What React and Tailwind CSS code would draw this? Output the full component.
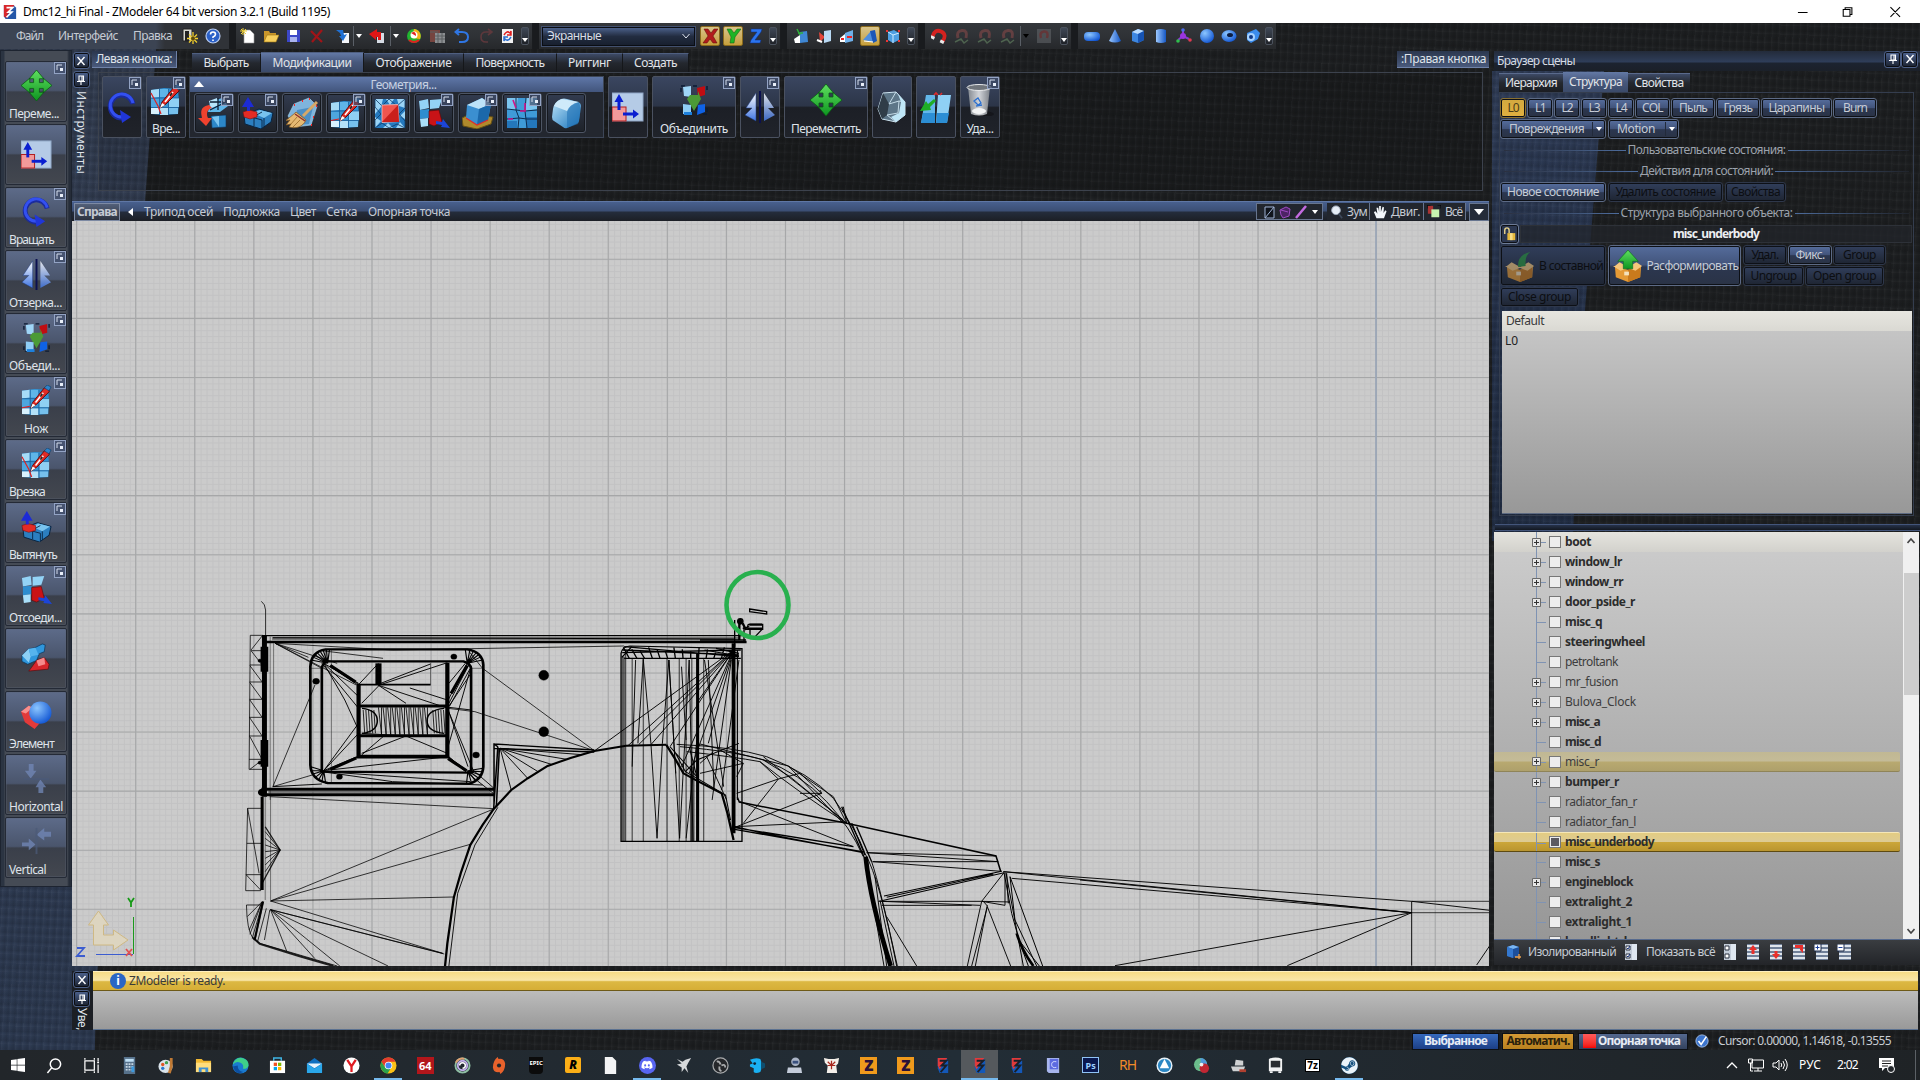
import React, { useLayoutEffect, useRef } from "react";
import { FaWindows, FaDiscord, FaSteam } from "react-icons/fa";

/* Text with a fixed advance width: the letter spacing is derived from the measured width. */
function T({ w, className = "", children }) {
  const ref = useRef(null);
  useLayoutEffect(() => {
    const el = ref.current;
    if (!el || !w) return;
    el.style.letterSpacing = "0px";
    const nat = el.getBoundingClientRect().width;
    el.style.letterSpacing = (w - nat) / String(children).length + "px";
  }, [w, children]);
  return <span ref={ref} className={"inline-block shrink-0 whitespace-nowrap " + className}>{children}</span>;
}

const Defs = () => (
  <svg width="0" height="0" className="absolute" aria-hidden="true">
    <defs>
      <linearGradient id="gBlue" x1="0" y1="0" x2="1" y2="1"><stop offset="0" stopColor="#bfe6fb" /><stop offset="1" stopColor="#1470b8" /></linearGradient>
      <linearGradient id="gGreen" x1="0" y1="0" x2="0" y2="1"><stop offset="0" stopColor="#5fe05f" /><stop offset="1" stopColor="#0d9420" /></linearGradient>
      <linearGradient id="gMirror" x1="0" y1="0" x2="0" y2="1"><stop offset="0" stopColor="#fff" /><stop offset="1" stopColor="#3f74e0" /></linearGradient>
      <linearGradient id="gTrash" x1="0" y1="0" x2="1" y2="0"><stop offset="0" stopColor="#8d9298" /><stop offset=".5" stopColor="#e3e5e8" /><stop offset="1" stopColor="#85898f" /></linearGradient>
      <linearGradient id="gCyl" x1="0" y1="0" x2="1" y2="0"><stop offset="0" stopColor="#9cc8ff" /><stop offset="1" stopColor="#1557c4" /></linearGradient>
      <radialGradient id="gSphere" cx=".35" cy=".3" r=".8"><stop offset="0" stopColor="#8cc6ff" /><stop offset="1" stopColor="#0a4fd0" /></radialGradient>
    </defs>
  </svg>
);

/* ---------- large tool icons, 32 x 32 ---------- */
const Mesh = () => (
  <g>
    <path d="M1 6L14 4 28 5 29 18 28 30 14 31 1 30Z" fill="#2e8fd2" />
    <path d="M1 6L9 5v8L1 14z" fill="#a6dbf7" /><path d="M10 5h8v8h-8z" fill="#5fb5e8" />
    <path d="M1 15h8v8H1z" fill="#4ea6de" /><path d="M10 14h8v9h-8z" fill="#3796d6" /><path d="M19 14h10v9H19z" fill="#8fd0f3" />
    <path d="M1 24h8v6H1z" fill="#d8f1fd" /><path d="M10 24h8v7h-8z" fill="#b4e1f8" /><path d="M19 24h9v6h-9z" fill="#76c0ec" />
    <path d="M9.500 5V31M18.500 5V31M1 14H29M1 23.500H29" stroke="#1d5a92" strokeWidth=".7" fill="none" />
  </g>
);
const Blade = () => (
  <g>
    <path d="M10 24L12 18 24 3 29 3 29 7 16 20Z" fill="#e02a24" stroke="#5d0b0b" strokeWidth="1" />
    <path d="M10 24L12 19 15 21Z" fill="#fff" /><path d="M15 18L23 8" stroke="#fff" strokeWidth="1.600" /><path d="M20 12l2-3" stroke="#222" strokeWidth="1.600" />
    <path d="M24 3L27 0 31 2 29 6Z" fill="#2d82c9" stroke="#12375c" strokeWidth=".6" />
  </g>
);
const I = {
  move: <g fill="url(#gGreen)" stroke="#0a5a14" strokeWidth=".8"><path d="M16 0l7.500 9h-4.500v4h4V8.500L32 16l-9 7.500V19h-4v4h4.500L16 32l-7.500-9H13v-4H9v4.500L0 16l9-7.500V13h4V9H8.500z" /></g>,
  pivot: <g><rect x="0" y="2" width="31" height="28" fill="#b5cbe6" stroke="#8fa6c5" /><rect x="0" y="16" width="14" height="14" fill="#f29a9a" stroke="#b01c1c" /><path d="M7 19V8" stroke="#0a1fd0" strokeWidth="3" /><path d="M2.500 11L7 3l4.500 8zM21 18.500l6 4.500-6 4.500z" fill="#0a1fd0" /><path d="M11 23h11" stroke="#0a1fd0" strokeWidth="3" /></g>,
  rotate: <g fill="none"><path d="M27 13A11.500 11.500 0 1 0 16 27" stroke="#1b2b9c" strokeWidth="5" /><path d="M27 12A11.500 11.500 0 1 0 16 26" stroke="#3350f0" strokeWidth="3" /><path d="M14 19l11 7-9 6z" fill="#2036d8" /></g>,
  mirror: <g><path d="M12 2v28L1 24l7-7H2z" fill="url(#gMirror)" stroke="#1f3a80" strokeWidth=".5" /><path d="M20 2v28l11-6-7-7h6z" fill="url(#gMirror)" opacity=".85" /><path d="M16 0v32" stroke="#0b1050" strokeWidth="2" /></g>,
  unite: <g><path d="M3 8V2h6M15 2h6M29 2v6M3 25v5h5M29 24v6h-6" stroke="#0b1a33" strokeWidth="1.400" fill="none" strokeDasharray="4 2" /><path d="M5 3l8-1v11l-7-1z" fill="#9fd6f7" /><path d="M19 4l8-2v9l-7 2z" fill="#c00d12" /><path d="M12 11h8v-4l3 8-7 12-7-12z" fill="#4b9a36" /><path d="M5 20l8 1v10l-8-1z" fill="#8fcdf5" /><path d="M6 28h8v3H6z" fill="#1d80dd" /><path d="M20 21l7-1v8l-8 3z" fill="#0f62e6" /></g>,
  knife: <g><Mesh /><Blade /><path d="M1 23.500L9 22" stroke="#e02020" strokeWidth="1.200" /></g>,
  cut: <g><Mesh /><Blade /><path d="M1 9l7 13 3 8" stroke="#e02020" strokeWidth="1.200" fill="none" /></g>,
  extrude: <g><path d="M2 18l15-6 14 4-2 9-10 7L3 27z" fill="#2c7fc0" stroke="#08233f" /><path d="M11 16l7-3 12 3-8 5z" fill="#79c3ee" /><path d="M2 18l18 5v8M11 20l9-5M22 21v9M12 20v9" stroke="#08233f" fill="none" strokeWidth=".9" /><path d="M1 15l6-2 8 2v5l-7 2-6-2z" fill="#e42b25" stroke="#7a1010" strokeWidth=".6" /><path d="M6 0l6 10H8v4H5v-4H0z" fill="#1c2bd6" /></g>,
  detach: <g><path d="M1 4l9-2 1 9-9 2zM12 3l12-1-3 9-9 1z" fill="#93d3f6" /><path d="M2 13l9-1v9l-9 1z" fill="#2e8dcf" /><path d="M2 22l8-1v8l-7 1z" fill="#aadff9" /><path d="M11 14l10-1 3 12-8 4-5-2z" fill="#c91317" stroke="#5e0707" strokeWidth=".6" /><path d="M18 24l6 1 1-3 7 9-9-1 1-2-6-1z" fill="#1c45d8" /></g>,
  blob: <g><path d="M1 13l7-7 6-1 8-4 3 1-1 7-5 2-3 7-9 4-6-3z" fill="#2f96dc" stroke="#0b3358" strokeWidth=".7" /><path d="M1 13l7-7 2 8-2 6z" fill="#8dd0f5" /><path d="M8 6l7-1 3 7-8 2z" fill="#56b4ee" /><path d="M16 18l8-3 5 7-1 5-20 2 3-4z" fill="#d8262b" stroke="#5e0b0d" strokeWidth=".7" /><path d="M16 18l8-3 1 7-7 2z" fill="#f6898a" /></g>,
  element: <g><path d="M0 12l8-6 4 2-1 10 10 4-7 8-10-7z" fill="#e33a3a" /><path d="M0 12l8-6 4 2-7 6z" fill="#f98f8c" /><circle cx="20" cy="13" r="11.500" fill="url(#gSphere)" /></g>,
  horiz: <g fill="#7288b8" opacity=".75"><path d="M8 1h5v7h3l-6 8-6-8h4zM18 31h5v-6h3l-6-8-5 8h3z" /><path d="M3 15.500h26v2H3z" fill="#4b5a78" /></g>,
  vert: <g fill="#7288b8" opacity=".75"><path d="M31 6v5h-7v4l-8-6 8-7v4zM1 17v4h7v4l7-6-7-6v4z" /><path d="M15 2h2v27h-2z" fill="#4b5a78" /></g>,
  geo1: <g><path d="M12 5l12-4 6 8-8 6H10z" fill="#5fb6ea" /><path d="M11 4l8-3 2 7-8 3z" fill="#b9e5fb" /><path d="M12 5h16L12 13M20 1v12" stroke="#0e1f36" strokeWidth="1.300" fill="none" /><path d="M13 19l15-1v12l-14 1z" fill="#2c87c8" stroke="#0f3155" strokeWidth=".6" /><path d="M14 20l7-1v11" fill="#7cc4ef" /><path d="M11 8C0 10 4 18 4 21H0l8 8 6-8h-4c-2-4-1-9 4-10z" fill="#f0422e" /></g>,
  brush: <g><path d="M8 7l15-6 8 8-6 19-16 2-7-11z" fill="#7fb4dd" stroke="#a9d8f4" strokeWidth=".6" /><path d="M11 13l16-3-4 17-14 1z" fill="#4c8fc6" /><path d="M8 8h1M16 4h1M23 2h1M30 9h1M27 20h1M25 28h1" stroke="#ff2020" strokeWidth="2" /><path d="M31 5L17 19" stroke="#d6a868" strokeWidth="3" /><path d="M10 15l10 8c-3 7-10 9-17 7l2-3-5 1 4-5-5 1c4-3 8-6 11-9z" fill="#e6b972" stroke="#7d531d" strokeWidth=".7" /><path d="M9 17l10 7" stroke="#8c3030" strokeWidth="1.500" /><path d="M11 20l-6 7M14 23l-7 7" stroke="#9a6a28" strokeWidth=".8" /></g>,
  quad: <g><path d="M1 2h30v29H1z" fill="#2579be" /><path d="M1 2h8l-2 8-6 7zM12 2h8l-4 6zM23 2h8v9l-6-2zM31 14v8l-5-3zM1 20l6 4-6 7zM9 31l5-5 5 5zM22 31l4-6 5 6z" fill="#9bd4f6" /><path d="M1 2l7 7L15 2l8 7 8-7v9l-6 6 6 7v7l-8-4-8 4-7-5-7 5v-8l6-6-6-7z" fill="none" stroke="#0f3a66" strokeWidth=".8" /><path d="M8 8l16-.500 1 17-17 1z" fill="#f0554e" stroke="#ffc5c0" strokeWidth=".7" /><path d="M8 25L24 8l1 17z" fill="#c91f1b" /></g>,
  bevel: <g><path d="M0 21l8-4 23 3-2 7-14 5L1 29z" fill="#b08a2c" stroke="#665015" /><path d="M5 8l15-7 9 6-3 16-11 5L4 21z" fill="#3b8fd0" /><path d="M5 8l15-7 9 6-12 5z" fill="#bde3f8" /><path d="M17 12l12-5-3 16-11 5z" fill="#1b68aa" /><path d="M4 21l11 7 11-5" fill="none" stroke="#e02b2b" strokeWidth="1.200" /></g>,
  weld: <g><path d="M1 1h30v30H1z" fill="#3f9bd8" /><path d="M1 1h11l-2 12-9-1zM20 1h11v11l-12 2z" fill="#7cc5ef" /><path d="M1 24h10v7H1zM20 20h11v11H20z" fill="#2477bb" /><path d="M10 1v12l3 8-1 10M20 1l-1 13 2 17M1 12l9 1 9 1 12-1M1 22l12-1 8 1h10" stroke="#0c2c50" fill="none" /><path d="M7 3l3 8M19 6v8h-5M2 22h5" stroke="#d0148a" strokeWidth="1.600" fill="none" /></g>,
  cube: <g><path d="M3 12Q4 5 11 2q3-1 6 0l11 3q3 1 3 4l-2 15q0 2-3 3l-9 4q-2 1-4-1l-9-6q-2-1-2-4z" fill="url(#gBlue)" /><path d="M4 9Q6 4 12 2l17 3q-9 2-12 9z" fill="#cfeafa" /><path d="M17 15q3-8 12-10 3 8-1 22l-11 4z" fill="#2373b5" opacity=".6" /></g>,
  hull: <g><path d="M7 2l13-1 9 10v13l-9 7-14-3-4-10z" fill="#5d7688" stroke="#cfe6f2" /><path d="M7 2l6 11-2 11-5 4-4-10z" fill="#303d48" /><path d="M13 13l7-12M13 13l10-3 6 1M11 24l9 7M11 24l11-2 1-12" stroke="#c5dcE8" fill="none" /><path d="M22 3l7 8v13l-9 7-5-5 8-4 2-11z" fill="#bfe6f7" /></g>,
  split: <g><path d="M6 4h9v28H1z" fill="#62b7ea" /><path d="M18 4h13l-4 28H16z" fill="#8fd0f4" /><path d="M3 22h12v10H1zM17 22h12l-2 10H16z" fill="#2c8ed4" /><path d="M14 4l2-2 2 2M20 4l2-2" stroke="#e02b2b" strokeWidth="1.600" fill="none" /><path d="M14 8L8 13l-2-3-6 10 11-1-1-3 6-6z" fill="#1fae27" /></g>,
  trash: <g><ellipse cx="19" cy="30" rx="11" ry="3" fill="#101114" opacity=".6" /><path d="M4 3h22l-3 27q-8 3-16 0z" fill="url(#gTrash)" opacity=".9" /><ellipse cx="15" cy="3.500" rx="12" ry="3" fill="#70757b" stroke="#e8eaec" /><path d="M10 17l4-3 3 5-3 2zM12 22l6-1" stroke="#2a6fd0" strokeWidth="1.300" fill="none" /><ellipse cx="15" cy="27" rx="7" ry="3" fill="#f2f3f4" /></g>,
};
const Icon = ({ n, className = "h-8 w-8" }) => <svg viewBox="0 0 32 32" className={"block shrink-0 " + className}>{I[n]}</svg>;

/* ---------- small toolbar icons, 16 x 16 ---------- */
const S = {
  exit: <g><path d="M1 1h9v12H1z" fill="#d9d9d0" stroke="#222" /><path d="M3 3h4v10H3z" fill="#222" /><path d="M11 4v12M5 10.500h11M7 6.500l8 8M15 6.500l-8 8" stroke="#f2ce2e" strokeWidth="1.300" /><circle cx="11" cy="10.500" r="2" fill="#5a4a10" /></g>,
  help: <g><circle cx="8" cy="8" r="7" fill="#2b61c8" stroke="#b9cbee" strokeWidth="1.200" /><path d="M5.500 6.500Q5.500 4 8 4t2.500 2.300Q10.500 8 8 9v1M8 11.500v1.500" stroke="#fff" strokeWidth="1.600" fill="none" /></g>,
  new: <g><path d="M4 2h6l4 4v9H4z" fill="#fff" stroke="#999" strokeWidth=".6" /><path d="M3 0v7M0 3h7M1 1l5 5M6 1L1 6" stroke="#f1d23a" /></g>,
  open: <g><path d="M1 3h5l1 2h6v9H1z" fill="#c9962a" /><path d="M4 7h12l-3 7H1z" fill="#f7cf5c" stroke="#9a7313" strokeWidth=".6" /></g>,
  save: <g><path d="M1 2h13v12H1z" fill="#3c47c9" /><path d="M4 2h7v5H4z" fill="#fff" /><path d="M4 9h7v5H4z" fill="#aab3ee" /></g>,
  del: <path d="M2 3l11 11M13 2L3 14" stroke="#a01418" strokeWidth="2.200" />,
  import: <g><path d="M7 5h7v10H7z" fill="#f4f6fa" /><path d="M1 2l7 0 1 5 3-1-4 7-4-5 2 0-1-3z" fill="#1f70d4" /></g>,
  export: <g><path d="M8 5h7v10H8z" fill="#d7dce4" /><path d="M8 1v3h4v8H9V9H7v3L0 6z" fill="#e01616" /></g>,
  ball: <g><circle cx="8" cy="8" r="7" fill="#21b530" /><path d="M8 1a7 7 0 0 1 6 10L6 10z" fill="#f2b21c" /><circle cx="8" cy="7" r="3.500" fill="#fff" /><path d="M5 5q5-3 5 3z" fill="#e02020" /><path d="M3 12q5 4 10 0" stroke="#e02020" strokeWidth="2" fill="none" /></g>,
  wall: <g><path d="M0 2h10v4H5v8H0z" fill="#76443f" /><path d="M5 5h10v10H5z" fill="#8b8e91" /><path d="M5 8h10M5 11h10M8 5v10M12 5v10M0 4h8" stroke="#5b5e61" /></g>,
  undo: <path d="M1 4h7q6 0 6 5t-6 5H5M5 1L1.500 4 5 7" stroke="#2f76e4" strokeWidth="2" fill="none" />,
  redo: <path d="M15 4H9Q4 4 4 9t5 5h2M11 1l4 3-4 3" stroke="#5d383c" strokeWidth="1.600" fill="none" />,
  refresh: <g><path d="M3 1h11v14H3z" fill="#f2f2f2" /><path d="M5 7q3-5 6-2l1-2v4H8" stroke="#e02020" strokeWidth="1.500" fill="none" /><path d="M12 9q-3 5-6 2l-1 2V9h4" stroke="#2a6fd0" strokeWidth="1.500" fill="none" /></g>,
  x: <path d="M2 1h4l3 4 3-4h4l-5 7 4 7h-4l-3-4-3 4H1l5-7z" fill="#b01c1c" stroke="#5b0a0a" strokeWidth=".5" />,
  y: <path d="M2 1h4l3 4 3-4h4L10 9l-1 6H5l1-6z" fill="#1fb325" stroke="#0c5a10" strokeWidth=".5" />,
  z: <path d="M3 1h11l-1 3-6 8h6l-1 3H2l1-3 6-8H3z" fill="#2b74ee" stroke="#0c2e86" strokeWidth=".5" />,
  selA: <g><path d="M1 11l6-4v8H2z" fill="#fff" /><path d="M7 4l7-1 1 11-8 1z" fill="#3f87d4" /><path d="M4 1l3 6M5 5h5" stroke="#2fae3a" strokeWidth="1.500" /></g>,
  selB: <g><path d="M3 4l6 5-5 5z" fill="#e3453a" /><path d="M8 3l7-1v11l-7 2z" fill="#b9d9f4" /><path d="M1 12l5 2" stroke="#fff" strokeWidth="2" /></g>,
  selC: <g><path d="M1 10l5-4v8H1z" fill="#fff" /><path d="M6 5l8-3v11l-8 2z" fill="#6fb0ea" /><path d="M2 11h3M8 9h5" stroke="#e22" strokeWidth="1.800" /></g>,
  selD: <g><path d="M1 12l8-9 3 11z" fill="#4f8fdf" /><path d="M8 3l5-1 2 11-4 2z" fill="#1b57b8" /><path d="M2 13l9 1" stroke="#fff" /></g>,
  selE: <g><path d="M3 4l6-2 5 3v7l-6 3-5-3z" fill="#4f9fe2" /><path d="M3 4l5 3v8M8 7l6-2" stroke="#cdeaff" fill="none" /><path d="M1 3h2M13 3h2M1 13h2M13 13h2" stroke="#e33" strokeWidth="2" /></g>,
  magnet: <g transform="rotate(25 8 8)"><path d="M2.500 12Q1 3 8 3t5.500 9" stroke="#d5221f" strokeWidth="3.800" fill="none" /><path d="M.800 10.500h4v3h-4zM11.200 10.500h4v3h-4z" fill="#e8e8e8" /></g>,
  magoff: <g opacity=".55"><path d="M4 10Q2 3 8 2.500 14 2 12 10" stroke="#8d4a4a" strokeWidth="3" fill="none" /><path d="M1 14l6-3 3 4 4-3" stroke="#6c8f68" strokeWidth="1.500" fill="none" /></g>,
  magbox: <g opacity=".55"><path d="M1 1h14v14H1z" fill="#65686c" /><path d="M5 10Q3 4 8 3.500 13 3 11 10" stroke="#8d3a3a" strokeWidth="2.500" fill="none" /></g>,
  slab: <rect x="0" y="4" width="16" height="9" rx="4" fill="url(#gSphere)" />,
  cone: <path d="M8 1l6 12q-6 3-12 0z" fill="url(#gCyl)" />,
  box: <g><path d="M2 4l6-3 6 2v9l-6 3-6-2z" fill="#3d86e0" /><path d="M2 4l6-3 6 2-6 3z" fill="#b7daff" /><path d="M8 6l6-3v9l-6 3z" fill="#1754b4" /></g>,
  cyl: <path d="M3 2q5-2 10 0v12q-5 2-10 0z" fill="url(#gCyl)" />,
  axes: <g><path d="M7 8V3M7 8l-5 4M7 8l6 3" stroke="#8a3bd0" strokeWidth="2" /><circle cx="7" cy="8" r="3" fill="#9a35e0" /><circle cx="7" cy="2" r="1.800" fill="#4c6bea" /><circle cx="2" cy="13" r="1.800" fill="#2fbe4d" /><circle cx="14" cy="12" r="1.800" fill="#e03a50" /></g>,
  sphere: <circle cx="8" cy="8" r="7" fill="url(#gSphere)" />,
  torus: <g><ellipse cx="8" cy="8" rx="7.500" ry="6" fill="url(#gSphere)" /><ellipse cx="9" cy="7" rx="3" ry="2" fill="#0b1c40" /></g>,
  tube: <g><path d="M2 5l9-4 4 4-2 6-7 4-4-3z" fill="#3b8cec" /><circle cx="6" cy="9" r="4" fill="#a6d2ff" /><circle cx="6" cy="9" r="2" fill="#123a86" /></g>,
  zoom: <g><circle cx="8" cy="6" r="5" fill="#e6edf6" stroke="#9aa6b8" /><path d="M11 10l4 5" stroke="#3c4658" strokeWidth="2" /></g>,
  hand: <path d="M4 15L1 8l2-1 2 3L4 3h2l1 5V1h2v7l2-6 1.500.500L12 9l2-3 1.500 1-3 8z" fill="#f4f7fb" />,
  fit: <g><path d="M1 1h6v9H1z" fill="#a33" /><path d="M5 5h9v9H5z" fill="#c8f5b0" /><path d="M0 4V0h4M12 0h4v4" stroke="#000" fill="none" /></g>,
  lock: <g><path d="M2 8V4q0-3 2.500-3T7 4v3" stroke="#e8d48c" strokeWidth="1.600" fill="none" /><path d="M5 7h9v8H5z" fill="#e5b83d" /><path d="M8 7h3v8H8z" fill="#f6dc86" /></g>,
};
const Sm = ({ n, className = "h-4 w-4" }) => <svg viewBox="0 0 16 16" className={"block shrink-0 " + className}>{S[n]}</svg>;

const Corner = () => (
  <span className="absolute right-0 top-0 flex h-3 w-3 items-center justify-center border border-[#93a3c4] bg-[#3e4c68]/70">
    <svg viewBox="0 0 8 8" className="h-2 w-2"><path d="M1 6V1h5" stroke="#d5deee" fill="none" /><path d="M4 4h3v3H4z" fill="#e8eef8" /></svg>
  </span>
);

const PinX = ({ pin }) => (
  <span className="flex h-[15px] w-[15px] shrink-0 items-center justify-center rounded-[2px] border border-[#0b0d12] bg-gradient-to-b from-[#4a5f8a] to-[#1d2535] outline outline-1 outline-[#4c5f86]">
    <svg viewBox="0 0 10 10" className="h-2.5 w-2.5">
      {pin ? <path d="M3 1h4.500v5H3zM1 6.500h8M5 7v3M6 1v5" stroke="#fff" fill="none" strokeWidth="1.100" /> : <path d="M1.500 1l7 8M8.500 1l-7 8" stroke="#fff" strokeWidth="1.400" />}
    </svg>
  </span>
);

/* ---------- menu and toolbars ---------- */
const Group = ({ className, children }) => (
  <div className={"flex h-[26px] shrink-0 items-center border-r border-[#1a1c1f] bg-gradient-to-b from-[#34373b] via-[#2f3236] to-[#26282b] " + className}>{children}</div>
);
const Grip = () => <span className="h-full w-[6px] shrink-0 bg-[#191b1e]" />;
const Cell = ({ n, on, className = "w-[23.200px]" }) => (
  <span className={"flex shrink-0 justify-center " + className}>
    <span className={"flex h-5 w-5 items-center justify-center " + (on ? "rounded-[2px] border border-[#8a6a1c] bg-gradient-to-b from-[#d8c48a] to-[#c79f3a]" : "")}><Sm n={n} /></span>
  </span>
);
const Drop = ({ dark }) => (
  <span className="flex h-5 w-[12px] shrink-0 items-center justify-center border-l border-[#5a5f66]">
    <span className={"border-x-[3px] border-t-[4px] border-x-transparent " + (dark ? "border-t-black" : "border-t-white")} />
  </span>
);
const More = () => (
  <span className="ml-auto mr-[3px] flex h-[18px] w-[8px] items-end justify-center rounded-[2px] border border-[#4b525d] bg-gradient-to-b from-[#3f4856] to-[#1f2228] pb-0.5">
    <span className="border-x-[3px] border-t-[4px] border-x-transparent border-t-white" />
  </span>
);

function MenuBar() {
  return (
    <div className="flex h-[27px] items-start text-xs text-[#c6cbd3]">
      <Group className="w-[230px] bg-[linear-gradient(to_right,#3c4453_0%,#3c4453_68%,#303338_72%,#303338_100%)] pl-[16px]">
        <T w={27}>Файл</T><T w={60} className="ml-[15px]">Интерфейс</T><T w={39} className="ml-[15px]">Правка</T>
        <Cell n="exit" className="ml-[6px] w-[23px]" /><Cell n="help" />
      </Group>
      <Group className="w-[303px]">
        <Grip />
        <Cell n="new" /><Cell n="open" /><Cell n="save" /><Cell n="del" />
        <Cell n="import" className="ml-1 w-[20px]" /><Drop />
        <Cell n="export" className="w-[25px]" /><Drop />
        <Cell n="ball" className="w-[25px]" /><Cell n="wall" /><Cell n="undo" /><Cell n="redo" /><Cell n="refresh" className="w-[22px]" /><More />
      </Group>
      <Group className="w-[248px]">
        <Grip />
        <span className="ml-[3px] flex h-[19px] w-[153px] items-center border border-[#0a0d13] bg-gradient-to-b from-[#4b6089] via-[#222c40] to-[#18202f] pl-1 pr-1 outline outline-1 outline-[#42506e]">
          <T w={54} className="text-[#d8dde6]">Экранные</T>
          <svg viewBox="0 0 8 6" className="ml-auto h-1.5 w-2"><path d="M.500 1L4 5l3.500-4" stroke="#dde3ee" fill="none" /></svg>
        </span>
        <Cell n="x" on className="ml-[3px] w-[23px]" /><Cell n="y" on /><Cell n="z" /><More />
      </Group>
      <Group className="w-[138px]">
        <Grip />
        <Cell n="selA" className="ml-0.5 w-[23px]" /><Cell n="selB" /><Cell n="selC" /><Cell n="selD" on /><Cell n="selE" /><More />
      </Group>
      <Group className="w-[153px]">
        <Grip />
        <Cell n="magnet" className="ml-0.5 w-[23px]" /><Cell n="magoff" /><Cell n="magoff" /><Cell n="magoff" /><Drop dark />
        <Cell n="magbox" className="w-[25px]" /><More />
      </Group>
      <Group className="w-[205px]">
        <Grip />
        <Cell n="slab" className="ml-0.5 w-[23px]" /><Cell n="cone" /><Cell n="box" /><Cell n="cyl" /><Cell n="axes" /><Cell n="sphere" className="w-[22px]" /><Cell n="torus" /><Cell n="tube" /><More />
      </Group>
    </div>
  );
}

/* ---------- left tool column ---------- */
const LEFT = [
  ["move", "Переме...", 50, 1], ["pivot", "", 0, 0], ["rotate", "Вращать", 45, 1], ["mirror", "Отзерка...", 53, 1],
  ["unite", "Объеди...", 51, 1], ["knife", "Нож", 24, 1, 1], ["cut", "Врезка", 36, 1], ["extrude", "Вытянуть", 48, 1],
  ["detach", "Отсоеди...", 53, 1], ["blob", "", 0, 0], ["element", "Элемент", 45, 0], ["horiz", "Horizontal", 54, 0], ["vert", "Vertical", 37, 0],
];
function LeftTools() {
  return (
    <div className="w-[72px] shrink-0">
      <div className="flex h-[837px] flex-col gap-[2px] border border-[#1d2430] bg-[linear-gradient(to_right,#2b3442_0px,#2b3442_3px,#454b55_4px,#454b55_66px,#262d39_68px)] pl-[4px] pt-[10px]">
        {LEFT.map(([n, label, w, c, center]) => (
          <div key={n} className="relative flex h-[61px] w-[62px] shrink-0 flex-col items-center rounded-[2px] border border-[#242a36] bg-[linear-gradient(to_bottom,#5d6b89_0%,#4a556c_48%,#3a3f4a_51%,#43474f_100%)] shadow-[inset_0_0_0_1px_#59627455]">
            {c ? <Corner /> : null}
            <Icon n={n} className={"h-[31px] w-[31px] " + (label ? "mt-[8px]" : "mt-[14px]")} />
            {label ? <T w={w} className={"mt-[5px] text-xs leading-4 text-[#dfe3ea] " + (center ? "" : "ml-[3px] self-start")}>{label}</T> : null}
          </div>
        ))}
      </div>
    </div>
  );
}

/* ---------- ribbon ---------- */
const TABS = [["Выбрать", 45, "w-[69px]"], ["Модификации", 79, "w-[103px]", 1], ["Отображение", 76, "w-[100px]"], ["Поверхность", 69, "w-[93px]"], ["Риггинг", 43, "w-[66px]"], ["Создать", 43, "w-[66px]"]];
const tabOn = "h-[20px] bg-gradient-to-b from-[#6379a5] via-[#47587c] to-[#3b4a69]";
const tabOff = "h-[19px] bg-gradient-to-b from-[#3d4a66] via-[#24282f] to-[#1b1d21]";
const Tile = ({ n, c, label, w, className = "w-10" }) => (
  <div className={"relative flex h-[62px] shrink-0 flex-col items-center rounded-[2px] border border-[#4a5160] bg-[linear-gradient(to_bottom,#3a4660_0%,#2c3548_48%,#1c1f26_51%,#20232a_100%)] " + className}>
    {c ? <Corner /> : null}
    <Icon n={n} className={"h-8 w-8 " + (label ? "mt-[7px]" : "mt-[14px]")} />
    {label ? <T w={w} className="mt-[5px] text-xs leading-4 text-[#dfe3ea]">{label}</T> : null}
  </div>
);
function Ribbon() {
  return (
    <div className="flex min-w-0 grow flex-col">
      <div className="flex h-[22px] items-start">
        <div className="mt-px flex h-[17px] w-[85px] items-center border-b border-r border-[#6f82a8] bg-gradient-to-b from-[#2b374e] to-[#4a5a7c] pl-[4px] text-xs text-[#dfe3ea]"><T w={76}>Левая кнопка:</T></div>
        <div className="ml-[15px] flex h-[22px] items-end">
          {TABS.map(([t, w, cw, on]) => (
            <div key={t} className={"flex items-center justify-center border-r border-t border-[#4f5f80] border-r-[#15171a] text-xs text-[#e1e4e9] " + cw + " " + (on ? tabOn : tabOff)}><T w={w}>{t}</T></div>
          ))}
        </div>
        <div className="ml-auto mt-px flex h-[17px] w-[92px] items-center border-b border-[#6f82a8] bg-gradient-to-b from-[#2b374e] to-[#4a5a7c] pl-[4px] text-xs text-[#dfe3ea]"><T w={85}>:Правая кнопка</T></div>
      </div>
      <div className="ml-[6px] mr-[6px] flex h-[119px] gap-1 border border-[#3c424d] bg-black/10 pl-[3px] pt-[3px]">
        <Tile n="rotate" c />
        <Tile n="cut" c label="Вре..." w={28} />
        <div className="-ml-px h-[62px] w-[415px] shrink-0 border border-[#3d4657] bg-[#23272f]">
          <div className="relative flex h-[15px] items-center justify-center bg-gradient-to-b from-[#5f77a8] to-[#42557c] pl-[14px]">
            <span className="absolute left-1 top-1 border-x-[5px] border-b-[6px] border-x-transparent border-b-white" />
            <T w={66} className="text-xs text-[#c7d1e2]">Геометрия...</T>
          </div>
          <div className="flex gap-[4px] pl-[4px] pt-px">
            {["geo1", "extrude", "brush", "knife", "quad", "detach", "bevel", "weld", "cube"].map((n) => (
              <div key={n} className="relative flex h-[40px] w-[40px] items-center justify-center rounded-[3px] border border-[#4d5564] bg-gradient-to-b from-[#323b4f] to-[#1e2229] shadow-[inset_0_0_0_1px_#15181e]">
                <Icon n={n} />
                {["brush", "quad", "cube"].includes(n) ? null : <Corner />}
              </div>
            ))}
          </div>
        </div>
        <Tile n="pivot" />
        <Tile n="unite" c label="Объединить" w={68} className="w-[84px]" />
        <Tile n="mirror" c />
        <Tile n="move" c label="Переместить" w={70} className="w-[84px]" />
        <Tile n="hull" /><Tile n="split" />
        <Tile n="trash" c label="Уда..." w={27} />
      </div>
    </div>
  );
}

/* ---------- viewport ---------- */
const fan = (x, y, pts) => pts.map(([a, b]) => `M${x} ${y}L${a} ${b}`).join("");
const range = (n) => Array.from({ length: n }, (_, i) => i);

function Wire() {
  const majX = range(24).map((i) => 4.6 + i * 59.07);
  const majY = range(12).map((i) => 38.3 + i * 59.09);
  return (
    <svg viewBox="0 0 1417 745" className="block h-[745px] w-[1417px]">
      <defs>
        <pattern id="minor" x="4.600" y="38.300" width="5.907" height="5.909" patternUnits="userSpaceOnUse"><path d="M0 .5H6M.5 0V6" stroke="#b9babb" strokeWidth="1" strokeOpacity=".5" fill="none" /></pattern>
      </defs>
      <rect width="1418" height="745" fill="#cbcbcb" />
      <rect width="1418" height="745" fill="url(#minor)" />
      <g stroke="#a6a7a8" strokeWidth="1.100">
        {majX.map((x) => <path key={x} d={`M${x} 0V745`} />)}
        {majY.map((y) => <path key={y} d={`M0 ${y}H1418`} />)}
        <path d="M1304 0V745" stroke="#97a5b8" strokeWidth="1.500" />
      </g>
      <g fill="none" stroke="#000">
        {/* rear half of the body */}
        <g transform="translate(158 379) scale(.38265 .33333)" strokeWidth="1">
          <g strokeWidth="2.500" strokeOpacity=".85">
            <path d="M82 4Q92 12 93 30V105M53 106H86M53 106L50 508H84M55 150L84 108M52 195H84L55 152 84 152M51 246H84L52 197M51 298H84L52 248M50 352H84L52 300M50 408H84L52 354M50 478H84L52 410M52 508L84 480M46 625H84L80 872H41L46 625 76 820M44 730H84M42 824H84M42 824L80 870" />
            <path d="M105 110V600M114 130V560M92 590V900M106 590V900" strokeOpacity=".5" />
            <path d="M92 680L131 750 84 850" strokeWidth="3.500" /><path d={fan(131, 750, [[92, 695], [92, 715], [92, 735], [92, 755], [92, 775], [92, 795], [92, 815]])} />
            <path d="M43 915H84M43 915Q44 990 60 1015L78 1030 280 1098" strokeWidth="2.500" />
            <path d="M60 1013L78 1032 180 1068 270 1098" strokeWidth="6" />
            <path d="M84 905L50 990M86 905L58 1015M88 905L66 1020M95 925L72 1025M104 930L90 1020M84 905L45 950M84 905L52 1003" />
            <path d={fan(106, 903, [[689, 627], [628, 733], [585, 891], [556, 1060]])} />
            <path d={fan(106, 929, [[556, 1060], [413, 1098], [287, 1098], [222, 1076], [148, 1053], [560, 1062]])} />
            <path d="M104 590L689 626M118 130L205 172M118 130L240 205M118 130L280 190M118 130L330 255M112 560L215 525M112 560L222 255M118 130L425 150M425 150L1030 138M240 152L400 175M660 205L952 452M640 335L952 452M570 325L640 335M660 205L625 155" />
          </g>
          <path d="M90 105V590" strokeWidth="13" /><path d="M90 140V215M90 420V500" strokeWidth="20" /><path d="M84 590V870" strokeWidth="8" /><path d="M86 905L64 1020" strokeWidth="5" />
          <path d="M90 107H1340" strokeWidth="4" /><path d="M90 126H1350" strokeWidth="7" /><path d="M110 116H1330" strokeWidth="10" strokeOpacity=".4" /><path d="M112 113L1320 117" strokeWidth="3" />
          <path d="M82 568H690M82 584H690" strokeWidth="9" /><path d="M100 576H680" strokeWidth="5" strokeOpacity=".5" />
          <circle cx="84" cy="577" r="8" fill="#000" strokeWidth="6" /><circle cx="78" cy="182" r="5" fill="#000" /><circle cx="78" cy="488" r="5" fill="#000" />
          {/* recessed tray */}
          <path d="M250 148H620Q660 155 662 195V500Q660 540 625 551L255 549Q212 540 210 495V200Q212 155 250 148Z" strokeWidth="7" />
          <path d="M255 184H610Q628 190 630 205V518L240 515V205Q242 188 255 184Z" strokeWidth="7" />
          <path d="M265 148V550M250 150V184M660 205H630M212 205H240" strokeWidth="2" strokeOpacity=".6" />
          <path d={fan(255, 190, [[212, 180], [214, 170], [219, 162], [226, 156], [234, 151], [243, 149], [252, 148], [260, 149]])} strokeWidth="3" />
          <path d={fan(620, 190, [[660, 180], [657, 170], [652, 162], [645, 156], [637, 151], [627, 149], [615, 149]])} strokeWidth="3" />
          <path d={fan(245, 512, [[211, 500], [213, 512], [217, 522], [223, 532], [231, 541], [240, 547], [250, 550]])} strokeWidth="3" />
          <path d={fan(622, 512, [[661, 505], [659, 515], [655, 525], [649, 534], [641, 542], [631, 549], [618, 551]])} strokeWidth="3" />
          <path d="M336 252V470H568V188" strokeWidth="11" /><path d="M336 254H524" strokeWidth="5" /><path d="M524 190V256" strokeWidth="2" strokeOpacity=".6" />
          <path d="M388 190V254" strokeWidth="16" /><path d="M336 318H570M336 407H570" strokeWidth="9" />
          <path d="M345 325Q385 330 385 362T345 400M560 325Q515 330 515 362T560 400" strokeWidth="4" />
          <path d={range(11).map((i) => `M${388 + i * 12} 322L${396 + i * 12} 404V322`).join("") + range(5).map((i) => `M${348 + i * 7} 330L${352 + i * 7} 400M${530 + i * 7} 330L${534 + i * 7} 400`).join("")} strokeWidth="2.300" />
          <path d="M245 190L336 250M262 200L336 252M270 205L336 256M240 190L336 325M245 190L336 290M245 190L300 300 336 390M620 190L570 300M626 190L572 310M615 190L572 250M628 205L574 318M245 512L336 468M255 510L336 470M245 512L336 400M245 512L336 370M622 514L570 470M615 514L572 470M245 512L570 470M245 515L628 545M630 200L570 440M388 256L570 325M388 256L460 310M388 256L568 188M394 250L524 192M568 325L636 512M570 330L622 500M630 330L572 322M344 400L460 408 344 460M460 408L568 460M344 465L400 410M336 254L388 190M344 310L390 256M470 264L568 300M112 560L240 552M240 515L425 545 660 555M570 322L630 220" strokeWidth="2.600" />
          <path d="M262 196L328 246M262 508L330 474M620 196L578 280M570 476L618 512" strokeWidth="9" />
          <g fill="#000"><circle cx="225" cy="244" r="9" /><circle cx="585" cy="170" r="8" /><circle cx="643" cy="465" r="9" /><circle cx="286" cy="530" r="8" /><ellipse cx="820" cy="226" rx="13" ry="15" /><ellipse cx="820" cy="395" rx="13" ry="15" /></g>
          <path d="M635 510L690 565M600 500L688 580" strokeWidth="2.500" />
          {/* wheel arch */}
          <path d="M562 1098L568 1030 585 892 603 820 628 735 660 675 689 627 735 570 778 535 830 498 890 474 952 453 1035 437 1140 434" strokeWidth="6" />
          <path d="M572 1098L595 880 640 735 700 622" strokeWidth="2.500" />
          <path d="M690 430V610M704 445L696 620M700 440L689 627M690 432L952 450M690 445L952 456M700 440L690 432" strokeWidth="4" />
          <path d={fan(706, 445, [[735, 570], [778, 535], [805, 515], [840, 493], [880, 478], [920, 464]])} strokeWidth="2.600" />
          {/* vertical housing */}
          <path d="M1022 724V160Q1025 140 1045 138L1338 146V724Z" strokeWidth="3.500" />
          <path d="M1026 150L1330 165M1030 175L1335 175M1025 158L1335 150M1030 140L1330 170" strokeWidth="4" />
          <path d={range(14).map((i) => `M${1028 + i * 22} ${142 + (i % 3) * 6}L${1044 + i * 20} 176`).join("") + "M1024 172L1050 140M1240 150L1330 168M1270 145L1330 160"} strokeWidth="3.500" />
          <path d="M1034 160V724M1051 175V724M1080 175V724M1142 175V724M1174 175V724M1192 175V724M1207 175V724M1238 175V724" strokeWidth="2.600" strokeOpacity=".8" />
          <path d="M1222 160V724" strokeWidth="8" /><path d="M1208 500V724" strokeWidth="12" strokeOpacity=".6" /><path d="M1028 170V724" strokeWidth="8" strokeOpacity=".55" /><path d="M1316 130V700" strokeWidth="10" /><path d="M1326 150V600" strokeWidth="3" />
          <path d="M1080 178L1066 430M1080 178L1100 430 1116 715 1130 430 1147 180 1175 715 1200 180 1210 724M1147 180L1165 520M1051 500L1060 180M1192 715L1222 400M1180 200L1192 420" strokeWidth="2.600" />
          <path d={fan(1316, 150, [[952, 453], [1040, 437], [1068, 434], [1100, 434], [1150, 440], [1180, 500], [1200, 520], [1250, 430], [1225, 300]]) + "M1240 180L1290 560M1260 600L1310 180M1250 180L1265 570M1285 570L1330 180"} strokeWidth="2.600" />
          <path d="M1140 434L1165 480 1185 520 1225 545 1285 580 1300 640 1316 720" strokeWidth="6" />
          <path d="M1160 450L1190 515 1240 548 1295 585 1308 660M1150 440L1220 530 1200 440M1190 515L1220 480 1330 430" strokeWidth="2.800" />
        </g>
        {/* inner arch and sill */}
        <g transform="translate(628 339) scale(.33333)" strokeWidth="2.800">
          <path d="M-70 553Q100 560 200 590 330 640 400 715 470 810 495 880 540 960 590 1218M-60 560Q110 575 190 600 300 640 380 725 450 800 490 890M-40 575Q100 590 180 605 300 700 440 790M0 552L265 618 400 710 440 790 430 740" />
          <path d="M110 700L235 657 130 790M235 657L300 640M235 657L180 605M270 650L440 790M270 650L190 600M110 800L365 700 300 640M120 725L460 860M60 570L130 610 110 650M0 640L130 610M365 700L360 690M0 610L40 575M20 590L80 720M190 590L430 780M265 618L430 790M300 700L365 700" />
          <path d="M112 712L118 726 440 790 888 888 902 934" strokeWidth="4.500" /><path d="M104 800L200 822 490 878M104 808L490 876M104 803L460 860" strokeWidth="4" />
          <path d="M104 800L430 785" /><path d="M425 740L492 890M455 790L495 885M470 800L515 905" strokeWidth="4" />
          <path d="M500 878L888 888M500 878L895 905M518 905H890M518 905L905 934" /><path d="M552 1008L905 934M545 1022L912 938M560 1012L880 942" strokeWidth="3.300" />
          <path d="M535 1024H845M545 1036H815M545 1024L840 1036M845 1024L912 938M845 1024L915 1036V938M845 1024L930 1026" />
          <path d="M497 890Q510 1020 572 1218" strokeWidth="14" /><path d="M515 905Q540 980 592 1218M495 890L552 1218M525 950L560 1218M540 1020L582 1218M560 1070L650 1218" />
          <path d="M845 1024L802 1218M862 1040L815 1218M862 1036L826 1218M862 1040L932 1218M850 1024L862 1038" />
          <path d="M912 938L935 1060 960 1150 985 1218M918 938L970 1218M930 950L945 1080 1010 1218M930 950L1028 1218M960 1145L1018 1218M920 940L925 1030" strokeWidth="3" />
          <path d="M950 1120Q965 1170 1000 1218" strokeWidth="8" />
          <g strokeWidth="4"><path d="M149 147L200 155V162L149 155ZM0 240H138M104 180V260M132 200V245M145 193H188V208H140L145 193M128 205L148 200M150 208V236M186 208L160 236" /><circle cx="121" cy="184" r="8" fill="#000" /><path d="M118 190V240M128 190L138 210M148 194H186M142 206H186" strokeWidth="7" /></g>
        </g>
        <g transform="translate(928 609) scale(.33333)" strokeWidth="2.800">
          <path d="M10 125L1235 214 1470 241M10 125L1235 248M35 145L1235 248M240 150L600 186 1235 248M345 407L1235 248 862 407M1235 214V407M1470 346L1430 405" /><path d="M1235 214H1470M1235 248H1470" strokeWidth="3.500" strokeOpacity=".6" />
        </g>
      </g>
      <ellipse cx="685.500" cy="384" rx="31" ry="33" fill="none" stroke="#28b04e" strokeWidth="4.600" />
      {/* axis tripod */}
      <path d="M21.500 724V704H16.500L26.500 690 36.500 704H31.500V714H41.500V709L56 719 41.500 729V724Z" fill="#ddd5c0" stroke="#cfb984" />
      <path d="M61.500 696V733" stroke="#1b9a1b" fill="none" /><path d="M24 733.500H61" stroke="#3b5cd0" fill="none" />
      <g fill="none" strokeWidth="1.800"><path d="M56 677l3 4.500V686M62 677l-3 4.500" stroke="#159a15" /><path d="M5 727H12L5 735H13" stroke="#3b5cd0" /><path d="M54 728l6 7M60 728l-6 7" stroke="#e05050" /></g>
    </svg>
  );
}

function ViewHeader() {
  return (
    <div className="mr-[2px] flex h-[20px] items-center border-t border-[#5f77a5] bg-[linear-gradient(to_bottom,#48608e_0%,#3c4f75_45%,#242c3b_55%,#1c1f25_100%)] text-xs text-[#c5cad4]">
      <div className="ml-[2px] flex h-[18px] w-[46px] items-center border border-[#7d8aa3] bg-gradient-to-b from-[#536079] to-[#2d3340] pl-[2px] font-bold"><T w={40}>Справа</T></div>
      <span className="ml-[8px] border-y-[4px] border-r-[5px] border-y-transparent border-r-white" />
      <T w={69} className="ml-[11px]">Трипод осей</T><T w={57} className="ml-[10px]">Подложка</T><T w={26} className="ml-[10px]">Цвет</T><T w={31} className="ml-[10px]">Сетка</T><T w={82} className="ml-[11px]">Опорная точка</T>
      <div className="ml-auto flex h-full items-center">
        <div className="flex h-[17px] w-[67px] items-center gap-1 border border-[#67758f] bg-[#22262e] pl-[7px]">
          <svg viewBox="0 0 44 14" className="h-3.5 w-11"><path d="M1 2h9v11H1zM10 2L1 13" stroke="#9fb2d4" fill="#10141c" /><path d="M16 5l6-3 4 2-1 7-6 2-2-3zM17 5l7 2" stroke="#a04bc4" fill="#4c2364" /><path d="M32 13L42 1" stroke="#c36be0" strokeWidth="2.500" /></svg>
          <span className="border-x-[3px] border-t-[4px] border-x-transparent border-t-white" />
        </div>
        <div className="ml-[4px] flex h-[17px] w-[43px] items-center gap-1 border-r border-[#67758f] bg-[#22262e] pl-[2px]"><Sm n="zoom" className="h-3.5 w-3.5" /><T w={20}>Зум</T></div>
        <div className="flex h-[17px] w-[54px] items-center gap-1 border-r border-[#67758f] bg-[#22262e] pl-[3px]"><Sm n="hand" className="h-3.5 w-3.5" /><T w={29}>Двиг.</T></div>
        <div className="flex h-[17px] w-[42px] items-center gap-1 border-r border-[#67758f] bg-[#22262e] pl-[3px]"><Sm n="fit" className="h-3.5 w-3.5" /><T w={17}>Всё</T></div>
        <div className="ml-[3px] flex h-[18px] w-[20px] items-center justify-center border border-[#67758f] bg-[#242b38]"><span className="border-x-[5px] border-t-[6px] border-x-transparent border-t-white" /></div>
      </div>
    </div>
  );
}

/* ---------- scene browser ---------- */
const btn = "flex shrink-0 items-center justify-center rounded-[2px] border border-[#0d1016] outline outline-1 text-xs ";
const face = "bg-[linear-gradient(to_bottom,#546b9a_0%,#42547b_48%,#2c3750_54%,#2a3346_100%)] text-[#c6ccd6] outline-[#5c6a85] ";
const faceOff = "bg-gradient-to-b from-[#303d59] to-[#1f2634] text-[#0c0e12] outline-[#2e374a] ";
const Btn = ({ t, w, className, on, off }) => (
  <div className={btn + "h-[18px] " + (on ? "bg-gradient-to-b from-[#d3a93f] to-[#e0b040] text-[#4a3c18] outline-[#8a7030] " : off ? faceOff : face) + className}><T w={w}>{t}</T></div>
);
const Split = ({ t, w, className }) => (
  <div className={btn + "h-[18px] " + face + className}>
    <T w={w} className="ml-[7px]">{t}</T><span className="ml-auto flex h-[14px] w-[12px] items-center justify-center border-l border-[#222a3a]"><span className="border-x-[3px] border-t-[4px] border-x-transparent border-t-white" /></span>
  </div>
);
const Head = ({ t, w }) => (
  <div className="flex h-[18px] items-center pl-[3px] pr-[3px] text-xs text-[#9ca2ac]">
    <span className="h-px grow bg-gradient-to-r from-[#2a3040] to-[#4d6c9c]" /><T w={w} className="mx-[2px]">{t}</T><span className="h-px grow bg-gradient-to-r from-[#4d6c9c] to-[#20242c]" />
  </div>
);
const Pack = ({ off }) => (
  <svg viewBox="0 0 32 34" className={"h-8 w-[30px] shrink-0 " + (off ? "opacity-60" : "")}>
    <path d="M2 17l14 4 14-4-1 12-13 5-13-5z" fill="#e59a35" /><path d="M16 21l13-4v12l-13 5z" fill="#c97a1c" /><path d="M2 17l5-4 9 5 9-5 6 4-7 5-8-3-8 3-8-5z" fill="#f5c77c" /><path d="M12 23h5v4h-5z" fill="#f4e2bd" />
    {off ? <path d="M14 18Q13 5 27 2q-6 4-5 15z" fill="#27913a" /> : <path d="M11 20v-8H5L16 0l11 12h-6v8z" fill="url(#gGreen)" stroke="#0c6b1c" strokeWidth=".7" />}
  </svg>
);

const TREE = [
  ["boot", 26, 1, 1, "head"], ["window_lr", 57, 1, 1], ["window_rr", 58, 1, 1], ["door_pside_r", 70, 1, 1], ["misc_q", 37, 1, 0], ["steeringwheel", 80, 1, 0],
  ["petroltank", 53, 0, 0], ["mr_fusion", 53, 0, 1], ["Bulova_Clock", 71, 0, 1], ["misc_a", 35, 1, 1], ["misc_d", 36, 1, 0], ["misc_r", 34, 0, 1, "soft"],
  ["bumper_r", 54, 1, 1], ["radiator_fan_r", 72, 0, 0], ["radiator_fan_l", 71, 0, 0], ["misc_underbody", 89, 1, 0, "sel"], ["misc_s", 35, 1, 0],
  ["engineblock", 68, 1, 1], ["extralight_2", 67, 1, 0], ["extralight_1", 67, 1, 0], ["headlight_l", 62, 1, 0],
];
const ROWBG = {
  head: "w-full bg-gradient-to-b from-[#e5e4de] to-[#d2d1cc]",
  soft: "w-[406px] rounded-[2px] bg-[linear-gradient(to_bottom,#c1b893_0%,#c4bb98_48%,#b8a970_52%,#aea06b_100%)] border-b border-[#8f8458]",
  sel: "w-[406px] rounded-[2px] bg-[linear-gradient(to_bottom,#e3cc82_0%,#ddcb93_48%,#cba638_52%,#b9952f_100%)] border-y border-t-[#f5e7b8] border-b-[#5d4a12]",
};

function TreeIcon({ k, className = "" }) {
  return (
    <svg viewBox="0 0 16 16" className={"h-4 w-4 shrink-0 " + className}>
      {k === "a" || k === "b" ? (
        <g><path d="M2 0h12v16H2z" fill="#c3ccd8" /><path d="M9 0h5v16H9z" fill="#dfe7f0" /><path d="M3 2h4v4H3zM3 10h4v4H3z" fill="#fff" stroke="#2c3340" />{k === "a" ? <path d="M4 4l1 1 2-3M4 12l1 1 2-3" stroke="#14307c" fill="none" /> : null}</g>
      ) : (
        <g><path d="M2 0h12v16H2z" fill="#6f7f98" /><path d="M2 1h12v2H2zM2 5h12v2H2zM2 9h12v2H2zM2 13h12v2H2z" fill="#dfe5ec" />
          {k === "up" ? <path d="M8 1l4 5H9.500v4h-3V6H4z" fill="#e8302c" /> : null}
          {k === "down" ? <path d="M8 15l4-5H9.500V7h-3v3H4z" fill="#e8302c" /> : null}
          {k === "corner" ? <path d="M4 1h8v8L9 6V4H4z" fill="#e8302c" /> : null}
          {k === "plus" || k === "minus" ? <g><path d="M0 0h7v7H0z" fill="#fff" stroke="#1c2b48" /><path d={k === "plus" ? "M1.500 3.500h4M3.500 1.500v4" : "M1.500 3.500h4"} stroke="#1c3f9a" /></g> : null}
        </g>
      )}
    </svg>
  );
}

function SceneBrowser() {
  return (
    <div className="flex w-[429px] shrink-0 flex-col pl-[3px]">
      <div className="mt-px flex h-[20px] items-center bg-[linear-gradient(to_bottom,#232b3a_0%,#2f3e5a_55%,#1c2330_60%,#1b2029_100%)] pl-[3px] text-xs text-[#d5dae3]">
        <T w={78}>Браузер сцены</T><span className="ml-auto mr-[3px] flex gap-[2px] pb-1"><PinX pin /><PinX /></span>
      </div>
      <div className="flex h-[21px] items-end pl-[5px] text-xs text-[#e1e4e9]">
        <div className={"flex w-[64px] items-center justify-center border-t border-[#5a6a8c] " + tabOff}><T w={52}>Иерархия</T></div>
        <div className={"flex w-[65px] items-center justify-center " + tabOn}><T w={53}>Структура</T></div>
        <div className={"flex w-[62px] items-center justify-center border-t border-[#5a6a8c] " + tabOff}><T w={49}>Свойства</T></div>
      </div>
      <div className="ml-[5px] mr-[6px] flex h-[424px] flex-col border border-[#343d4e] px-px">
        <div className="flex h-[19px] gap-[3px] pt-[6px]">
          <Btn t="L0" w={11} on className="w-6" /><Btn t="L1" w={10} className="w-6" /><Btn t="L2" w={11} className="w-6" /><Btn t="L3" w={11} className="w-6" /><Btn t="L4" w={11} className="w-6" />
          <Btn t="COL" w={21} className="w-[33px]" /><Btn t="Пыль" w={28} className="w-[42px]" /><Btn t="Грязь" w={29} className="w-[42px]" /><Btn t="Царапины" w={56} className="w-[69px]" /><Btn t="Burn" w={24} className="w-[42px]" />
        </div>
        <div className="mt-[8px] flex h-[18px] gap-[4px]"><Split t="Повреждения" w={75} className="w-[104px]" /><Split t="Motion" w={38} className="w-[69px]" /></div>
        <div className="mt-[3px] h-[18px]"><Head t="Пользовательские состояния:" w={158} /></div>
        <div className="mt-[3px] h-[18px]"><Head t="Действия для состояний:" w={133} /></div>
        <div className="mt-[3px] flex h-[18px] gap-[4px]"><Btn t="Новое состояние" w={92} className="w-[104px]" /><Btn t="Удалить состояние" w={100} off className="w-[113px]" /><Btn t="Свойства" w={49} off className="w-[59px]" /></div>
        <div className="mt-[3px] h-[18px]"><Head t="Структура выбранного объекта:" w={172} /></div>
        <div className="mt-[3px] flex h-[18px] gap-[2px]">
          <span className={btn + "h-[18px] w-[17px] bg-[#2c3750] outline-[#6d7b96]"}><Sm n="lock" className="h-4 w-3.5" /></span>
          <span className="flex grow items-center justify-center border border-[#2d3138] bg-[#22252b]/70 text-xs font-bold text-[#eceef1]"><T w={86}>misc_underbody</T></span>
        </div>
        <div className="mt-[3px] flex h-[39px] gap-[4px]">
          <div className={btn + faceOff + "h-[39px] w-[104px] pl-0.5"}><Pack off /><T w={64} className="ml-1">В составной</T></div>
          <div className={btn + face + "h-[39px] w-[131px] pl-0.5"}><Pack /><T w={92} className="ml-1">Расформировать</T></div>
          <div className="flex flex-col gap-[3px]">
            <div className="flex gap-[3px]"><Btn t="Удал." w={27} off className="w-[42px]" /><Btn t="Фикс." w={29} className="w-[42px]" /><Btn t="Group" w={33} off className="w-[51px]" /></div>
            <div className="flex gap-[3px]"><Btn t="Ungroup" w={46} off className="w-[59px]" /><Btn t="Open group" w={63} off className="w-[77px]" /></div>
          </div>
        </div>
        <div className="mt-[3px] flex h-[18px]"><Btn t="Close group" w={63} off className="w-[77px]" /></div>
        <div className="ml-px mt-[5px] h-[203px] border-b border-[#5d6a82] bg-gradient-to-b from-[#cacaca] to-[#989898] text-xs text-[#3a3a3a]">
          <div className="flex h-[20px] items-center bg-gradient-to-b from-[#e7e6e0] to-[#dad9d3] pl-[4px]"><T w={38}>Default</T></div>
          <div className="flex h-[20px] items-center pl-[3px] text-[#222]"><T w={13}>L0</T></div>
        </div>
      </div>
      <div className="ml-[1px] mt-[8px] h-[7px] border-y border-[#43557a] bg-gradient-to-b from-[#26324a] to-[#131821]" />
      <div className="mt-px flex h-[407px]">
        <div className="h-full w-[409px] overflow-hidden bg-gradient-to-b from-[#cdcdcd] to-[#979797]">
          {TREE.map(([t, w, bold, exp, kind]) => (
            <div key={t} className={"relative flex h-[20px] items-center " + (kind ? ROWBG[kind] : "w-full")}>
              <span className="absolute left-[42px] top-0 h-full w-px bg-[#7f93b3]" /><span className="absolute left-[43px] top-[10px] h-px w-[9px] bg-[#7f93b3]" />
              <span className="ml-[38px] flex w-[9px] shrink-0">{exp ? <svg viewBox="0 0 9 9" className="relative h-[9px] w-[9px]"><path d="M.5.5h8v8h-8z" fill="#e6e6e6" stroke="#6a6a6a" /><path d="M2 4.500h5M4.500 2v5" stroke="#333" /></svg> : null}</span>
              <span className="ml-[8px] flex h-[12px] w-[12px] shrink-0 items-center justify-center border border-[#777] bg-[#ededed]">{kind === "sel" ? <span className="h-2 w-2 bg-[#5c5a60]" /> : null}</span>
              <T w={w} className={"ml-[4px] text-xs leading-5 " + (bold ? "font-bold text-[#2c2c2c]" : "text-[#3d3d3d]")}>{t}</T>
            </div>
          ))}
        </div>
        <div className="flex w-[16px] flex-col items-center bg-[#f0f0f0] pt-[6px]">
          <svg viewBox="0 0 8 6" className="h-1.5 w-2"><path d="M.500 5L4 1l3.500 4" stroke="#444" strokeWidth="1.600" fill="none" /></svg>
          <span className="mt-[29px] h-[122px] w-[15px] bg-[#cdcdcd]" />
          <svg viewBox="0 0 8 6" className="mb-[5px] mt-auto h-1.5 w-2"><path d="M.500 1L4 5l3.500-4" stroke="#444" strokeWidth="1.600" fill="none" /></svg>
        </div>
      </div>
      <div className="flex h-[26px] items-center border-t border-[#566a8e] bg-gradient-to-b from-[#3a3d41] to-[#232529] pb-px pl-[12px] text-xs text-[#c6cbd3]">
        <svg viewBox="0 0 16 16" className="h-4 w-4 shrink-0"><path d="M1 3l6-2 6 2v9l-6 2-6-2z" fill="#1c4f9c" /><path d="M1 3l6-2 6 2-6 2z" fill="#7ab6f2" /><path d="M1 3l6 2v9l-6-2z" fill="#3478cf" /><path d="M9 13h6M13 10v5" stroke="#e8a050" strokeWidth="1.300" /></svg>
        <T w={88} className="ml-[6px]">Изолированный</T>
        <TreeIcon k="a" className="ml-[7px]" /><T w={69} className="ml-[7px]">Показать всё</T>
        <span className="ml-[7px] flex gap-[7px]"><TreeIcon k="b" /><TreeIcon k="up" /><TreeIcon k="down" /><TreeIcon k="corner" /><TreeIcon k="plus" /><TreeIcon k="minus" /></span>
      </div>
    </div>
  );
}

/* ---------- taskbar ---------- */
const K = {
  search: <g fill="none" stroke="#fff" strokeWidth="1.600"><circle cx="10" cy="7.500" r="5.500" /><path d="M6 11.500L1.500 17" /></g>,
  view: <path d="M2 4h10v10H2zM2 1v2M12 1v2M2 15v2M12 15v2M16 1v4M16 8v9M15 6h2" fill="none" stroke="#fff" strokeWidth="1.300" />,
  calc: <g><path d="M3 0h12v18H3z" fill="#56718b" /><path d="M4.500 2h9v3h-9z" fill="#bfe0f5" /><path d="M5 7.500h8M5 10.500h8M5 13.500h8" stroke="#c6d6e4" strokeWidth="1.800" strokeDasharray="2 1" /><path d="M11 10h3v6h-3z" fill="#3c99dd" /></g>,
  paint: <g><ellipse cx="8" cy="10" rx="7.500" ry="7" fill="#d9e3ea" /><circle cx="5" cy="8" r="1.800" fill="#e05525" /><circle cx="9" cy="6" r="1.800" fill="#40a050" /><circle cx="5" cy="12" r="1.800" fill="#2a78d0" /><path d="M14 1v9l-2 7" stroke="#c07a35" strokeWidth="3" /></g>,
  folder: <g><path d="M1 2h6l2 2h8v12H1z" fill="#f2b932" /><path d="M1 6h16v10H1z" fill="#ffdd7c" /><path d="M4 16v-5h10v5h-3v-3H7v3z" fill="#3f91d4" /></g>,
  edge: <g><circle cx="9" cy="9" r="8.500" fill="#1a7bd0" /><path d="M1 7Q4 0 11 1q7 2 6.500 8-1 4-6 3.500Q13 8 9 6 4 4 1 8z" fill="#3fd089" /><path d="M6 9q0 6 6 7-8 4-11-6z" fill="#0c4fa0" /></g>,
  store: <g><path d="M5 4V1h8v3" stroke="#3fb5e5" strokeWidth="1.500" fill="none" /><path d="M1 4h16v13H1z" fill="#fff" /><path d="M5 6h3.500v3.500H5z" fill="#f25022" /><path d="M9.500 6H13v3.500H9.500z" fill="#7fba00" /><path d="M5 10.500h3.500V14H5z" fill="#00a4ef" /><path d="M9.500 10.500H13V14H9.500z" fill="#ffb900" /></g>,
  mail: <g><path d="M1 7l8-6 8 6v9H1z" fill="#0f70c0" /><path d="M1 7h16l-8 5z" fill="#e8f4fc" /><path d="M1 7l8 5.500L17 7v10H1z" fill="#2aa7ea" /></g>,
  yandex: <g><circle cx="9" cy="9" r="8.500" fill="#fff" /><path d="M4.500 3L9 10v6M13.500 3L9 10" stroke="#e01b22" strokeWidth="2.400" fill="none" /></g>,
  chrome: <g><circle cx="9" cy="9" r="8.500" fill="#fbc116" /><path d="M1.500 5a8.500 8.500 0 0 1 15 0H9L5.500 11z" fill="#e33b2e" /><path d="M1.500 5a8.500 8.500 0 0 0 6.500 12.500L12 11H5.500z" fill="#2ba24c" /><circle cx="9" cy="9" r="4" fill="#fff" /><circle cx="9" cy="9" r="3.200" fill="#4285f4" /></g>,
  swirl: <g fill="none"><circle cx="9" cy="9" r="7.500" stroke="#8fbfa5" strokeWidth="2" /><path d="M2 6a7.500 7.500 0 0 1 9-4" stroke="#e0a070" strokeWidth="2" /><circle cx="9" cy="9" r="5" stroke="#c2b0ea" strokeWidth="2" /><path d="M6 9a3 3 0 1 1 3 3" stroke="#fff" strokeWidth="1.600" /></g>,
  origin: <g><path d="M7 0l1 2q6-1 7 5 0 8-5 11l-1-2q-6 1-7-5Q2 4 7 0z" fill="#e8622c" /><circle cx="8.500" cy="9" r="2.200" fill="#20262c" /></g>,
  page: <path d="M3 0h8l4 4v14H3z" fill="#f3f4f5" />,
  plane: <path d="M1 2l6 3 3-2 6-2-3 5-2 4 2 7-4-5-3 4v-5L1 8l5-1z" fill="#d7d9db" />,
  obs: <g fill="none" stroke="#a9abad"><circle cx="9" cy="9" r="8" fill="#25272a" strokeWidth="1.300" /><path d="M9 8q-1-4-4-3M10 9q4-2 4 2M8 10q-1 4 2 5" strokeWidth="2" /></g>,
  vegas: <g><path d="M1 3q6-3 11-1l1 3v8l-1 3q-5 2-7 0v-4l-4-2v-2l3-1z" fill="#19b0f2" /><path d="M13 5l4 2v4l-4 2z" fill="#0e4f70" /><circle cx="6" cy="7" r="1.500" fill="#123" /></g>,
  robot: <g><path d="M2 11h14l1 6H1z" fill="#c4ccda" /><circle cx="10" cy="5" r="4.500" fill="#aab4c6" /><path d="M7 4h6v3H7z" fill="#39507e" /></g>,
  bull: <g><path d="M1 1l5 1h6l5-1-1 6-2 2 1 8H4l1-8-3-3z" fill="#f4efe9" /><path d="M5 5l4 4 4-4M9 4v9M5 9h8" stroke="#a8281e" strokeWidth="1.300" fill="none" /></g>,
  zm: <g><path d="M4 1h9l2 3v13H6l-2-5z" fill="#1458b8" /><path d="M4 1h10L6 13l-2-4z" fill="#e23b3b" /><path d="M6 4h7L8 9h5L7 16" stroke="#191f28" strokeWidth="2" fill="none" /></g>,
  book: <g><path d="M2 1h13v16H4l-2-2z" fill="#a8b6ee" /><path d="M5 2h9v11H5z" fill="#5c6ae0" /><path d="M12 5q-5-1-5 3t5 3" stroke="#d6dcff" fill="none" /></g>,
  tri: <g><circle cx="9" cy="9" r="8.500" fill="#e9f2f8" /><circle cx="9" cy="9" r="7" fill="#2b87c4" /><path d="M9 2l5 10H4z" fill="#fff" /></g>,
  geo: <g><circle cx="8" cy="8" r="7" fill="#6bbd8c" /><path d="M8 1a7 7 0 0 1 7 7L8 8z" fill="#4f9bdc" /><circle cx="12" cy="12" r="5" fill="#c12633" /><circle cx="9" cy="8" r="2" fill="#eee" /></g>,
  tank: <g fill="#cfd1d2"><path d="M6 3l8 1v5H5zM1 10h15l-2 5H3z" /><path d="M10 13h7v3h-7z" fill="#b04030" /></g>,
  bus: <g><path d="M2 2q7-3 14 0v13H2z" fill="#f1f2f3" /><path d="M4 4h10v7H4z" fill="#2a2d31" /><path d="M3 15h3v2H3zM12 15h3v2h-3z" fill="#f1f2f3" /></g>,
};
const KI = ({ n }) => <svg viewBox="0 0 18 18" className="h-[17px] w-[17px]">{K[n]}</svg>;
const Zy = () => <span className="flex h-[17px] w-[17px] items-center justify-center bg-[#f09a1c] text-[15px] font-black leading-none text-[#2b1238]">Z</span>;
const APPS = [
  [<KI n="calc" />], [<KI n="paint" />], [<KI n="folder" />], [<KI n="edge" />], [<KI n="store" />], [<KI n="mail" />], [<KI n="yandex" />], [<KI n="chrome" />, "u"],
  [<span className="flex h-[17px] w-[17px] items-center justify-center bg-[#b3161b] text-[11px] font-bold leading-none text-white">64</span>],
  [<KI n="swirl" />], [<KI n="origin" />],
  [<span className="flex h-[17px] w-[14px] items-start justify-center rounded-b-[4px] bg-[#0b0b0b] pt-[3px] text-[6px] font-bold leading-none text-white">EPIC</span>],
  [<span className="flex h-[16px] w-[16px] items-center justify-center rounded-[2px] bg-[#fcaf17] text-[12px] font-black italic leading-none text-black">R</span>],
  [<KI n="page" />], [<span className="flex h-[17px] w-[17px] items-center justify-center rounded-full bg-[#5865f2]"><FaDiscord size={12} color="#fff" /></span>, "u"],
  [<KI n="plane" />], [<KI n="obs" />], [<KI n="vegas" />], [<KI n="robot" />], [<KI n="bull" />], [<Zy />], [<Zy />], [<KI n="zm" />], [<KI n="zm" />, "a"], [<KI n="zm" />], [<KI n="book" />],
  [<span className="flex h-[16px] w-[17px] items-center justify-center border border-[#8fc3f5] bg-[#0a1950] text-[9px] font-bold leading-none text-[#9ccfff]">Ps</span>],
  [<span className="text-[14px] leading-none tracking-[-1px] text-[#f08a2a]">RH</span>],
  [<KI n="tri" />], [<KI n="geo" />], [<KI n="tank" />], [<KI n="bus" />],
  [<span className="flex h-[13px] w-[15px] items-center justify-center border border-black bg-white text-[10px] font-bold leading-none text-black">7z</span>],
  [<span className="flex h-[17px] w-[17px] items-center justify-center rounded-full bg-[#14507f]"><FaSteam size={17} color="#eaf3fa" /></span>, "u"],
];
function Taskbar() {
  return (
    <div className="flex h-[30px] items-center bg-gradient-to-r from-[#22262a] via-[#222d36] to-[#1f2326] text-xs text-white">
      <span className="flex w-[36px] justify-center"><FaWindows size={16} /></span>
      <span className="flex w-[36px] justify-center"><KI n="search" /></span>
      <span className="flex w-[39px] justify-center"><KI n="view" /></span>
      {APPS.map(([el, st], i) => (
        <span key={i} className={"relative flex h-[30px] w-[36.970px] shrink-0 items-center justify-center " + (st === "a" ? "bg-[#55595d]" : "")}>
          {el}
          {st ? <span className={"absolute bottom-0 h-[2px] bg-[#76b9ed] " + (st === "a" ? "w-full" : "w-[28px]")} /> : null}
        </span>
      ))}
      <div className="ml-auto flex items-center">
        <svg viewBox="0 0 12 8" className="h-2 w-3"><path d="M1 7l5-5 5 5" stroke="#fff" fill="none" strokeWidth="1.300" /></svg>
        <svg viewBox="0 0 16 14" className="ml-[10px] h-3.5 w-4"><path d="M4 2h11.500v8H4zM10 10v3M6 13h8M.5 1h4v4h-4zM2.500 5v8H5" stroke="#fff" fill="none" /></svg>
        <svg viewBox="0 0 16 14" className="ml-[8px] h-3.5 w-4"><path d="M1 5h3l3-3v10L4 9H1zM9 5q1.500 2 0 4M11 3q3 4 0 8M13 1q4.500 6 0 12" stroke="#fff" fill="none" /></svg>
        <T w={22} className="ml-[11px]">РУС</T><T w={21} className="ml-[16px]">2:02</T>
        <svg viewBox="0 0 16 16" className="ml-[21px] h-4 w-4"><path d="M0 1h15v10H6l-3 3v-3H0z" fill="#fff" /><path d="M3 4h9M3 6.500h9M3 9h6" stroke="#222" /><circle cx="12" cy="12" r="3.500" fill="#22262a" stroke="#fff" /></svg>
        <span className="ml-[20px] mr-[4px] h-[30px] w-px bg-[#5c6166]" />
      </div>
    </div>
  );
}

export default function App() {
  return (
    <div className="relative h-[1080px] w-[1920px] overflow-hidden bg-[#1d1f21] font-['Noto_Sans','Open_Sans',sans-serif] leading-none">
      <Defs />
      {/* skin highlights and woven texture behind the panels */}
      <div className="absolute left-0 top-[23px] h-[1027px] w-[158px] bg-gradient-to-b from-[#323c4f] via-[#313d54] to-[#2c3950] [clip-path:polygon(0_0,100%_0,92%_17%,61%_94%,60%_100%,0_100%)]" />
      <div className="absolute left-[1492px] top-[71px] h-[470px] w-[112px] bg-gradient-to-b from-[#2f3c56] via-[#26334c] to-[#202c42] [clip-path:polygon(0_0,100%_0,80%_60%,72%_100%,0_100%)]" />
      <div className="absolute inset-0 bg-[repeating-linear-gradient(93deg,#ffffff07_0px,transparent_2px,#00000018_5px,transparent_7px),repeating-linear-gradient(2deg,#ffffff06_0px,transparent_2px,#00000018_4px,transparent_9px)]" />
      <div className="relative flex h-full flex-col">
        <div className="flex h-[23px] items-center bg-white pl-[3px] text-xs text-black">
          <svg viewBox="0 0 16 18" className="h-[18px] w-[14px]"><path d="M1 1h11l3 3v13H3L1 14z" fill="#2557a8" /><path d="M1 1h12L5 12v4L1 14z" fill="#d8262b" /><path d="M4 4h7L6 9h4l-6 6" stroke="#fff" strokeWidth="2" fill="none" /></svg>
          <T w={307} className="ml-[6px]">Dmc12_hi Final - ZModeler 64 bit version 3.2.1 (Build 1195)</T>
          <svg viewBox="0 0 110 12" className="ml-auto mr-[18px] h-3 w-[106px]"><path d="M2 6.500h10M49 3.500h7v7h-7zM51 3.500v-2h7v7h-2M98 1l10 10M108 1L98 11" stroke="#000" fill="none" strokeWidth="1.100" /></svg>
        </div>
        <MenuBar />
        <div className="flex h-[1000px]">
          <LeftTools />
          <div className="flex min-w-0 grow flex-col">
            <div className="flex h-[916px]">
              <div className="flex w-[1419px] shrink-0 flex-col">
                <div className="mr-[2px] flex h-[151px]">
                  <div className="flex w-[20px] shrink-0 flex-col items-center pr-[2px] pt-[3px] text-xs text-[#dfe3ea]">
                    <PinX /><span className="h-[4px]" /><PinX pin />
                    <span className="mt-[4px] h-[80px] tracking-[.4px] [writing-mode:vertical-rl]">Инструменты</span>
                  </div>
                  <Ribbon />
                </div>
                <ViewHeader />
                <Wire />
              </div>
              <SceneBrowser />
            </div>
            <div className="flex h-[64px] pt-[5px]">
              <div className="flex w-[21px] flex-col items-center bg-[#1c1f24] pr-[2px] pt-px text-xs text-[#dfe3ea]">
                <PinX /><span className="h-[4px]" /><PinX pin />
                <span className="mt-[2px] h-[22px] whitespace-nowrap tracking-[-.5px] [writing-mode:vertical-rl]">Уве,</span>
              </div>
              <div className="mr-[2px] flex grow flex-col border-b border-[#5b7190] bg-gradient-to-b from-[#cfcfcf] to-[#999]">
                <div className="flex h-[20px] items-center border-y border-b-[#6e5a18] border-t-[#fff0c0] bg-[linear-gradient(to_bottom,#f7dc86_0%,#f9e6a8_46%,#dcb843_54%,#d6ae36_100%)] pl-[17px] text-xs text-[#3b3b38]">
                  <span className="flex h-4 w-4 items-center justify-center rounded-full bg-[#2a66c4] text-[12px] font-bold text-white">i</span>
                  <T w={96} className="ml-[3px]">ZModeler is ready.</T>
                </div>
              </div>
            </div>
            <div className="flex h-[20px] items-center justify-end pr-[29px] pt-[2px] text-xs text-[#c8ccd2]">
              <span className="flex h-[15px] w-[85px] items-center justify-center bg-gradient-to-b from-[#3669bd] to-[#1c3f86] font-bold text-[#e7ecf5] outline outline-1 outline-[#0d1016]"><T w={63}>Выбранное</T></span>
              <span className="ml-[5px] flex h-[15px] w-[70px] items-center justify-center bg-gradient-to-b from-[#d49a35] to-[#b9811f] font-bold text-[#2b210c] outline outline-1 outline-[#0d1016]"><T w={63}>Автоматич.</T></span>
              <span className="ml-[6px] flex h-[15px] w-[108px] items-center bg-gradient-to-b from-[#54688f] to-[#33415d] pl-[4px] font-bold text-[#e7ecf5] outline outline-1 outline-[#0d1016]"><span className="h-[14px] w-[13px] bg-gradient-to-b from-[#ff5a5a] to-[#f30000]" /><T w={82} className="ml-[2px]">Опорная точка</T></span>
              <svg viewBox="0 0 16 16" className="ml-[8px] h-3.5 w-3.5"><circle cx="8" cy="8" r="7" fill="#3c74cc" stroke="#a9c3ec" /><path d="M4 8l3 4 6-9" stroke="#fff" strokeWidth="1.800" fill="none" /></svg>
              <T w={173} className="ml-[9px]">Cursor: 0.00000, 1.14618, -0.13555</T>
            </div>
          </div>
        </div>
        <Taskbar />
      </div>
    </div>
  );
}
